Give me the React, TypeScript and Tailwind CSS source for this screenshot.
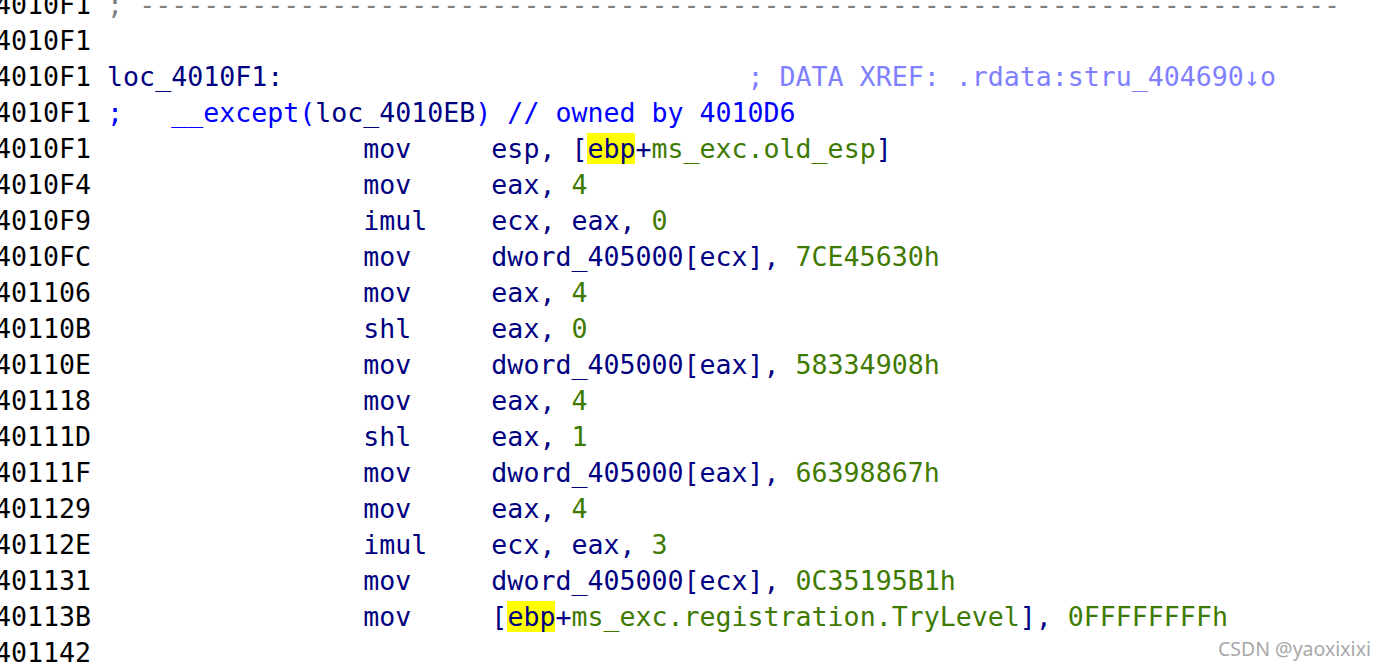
import type { ReactNode } from "react";

const NAVY = "text-[#000080]";
const GREEN = "text-[#3f7a00]";
const BLUE = "text-[#0000ff]";

function Line({ addr, children }: { addr: string; children?: ReactNode }) {
  return (
    <div className="h-[36px] whitespace-pre leading-[36px]">
      <span className="text-black">{addr}</span>
      {children}
    </div>
  );
}

function Ins({ addr, mn, children }: { addr: string; mn: string; children: ReactNode }) {
  return (
    <Line addr={addr}>
      {" ".repeat(17)}
      <span className={NAVY}>{mn.padEnd(8, " ")}</span>
      {children}
    </Line>
  );
}

function Reg({ children }: { children: ReactNode }) {
  return <span className={NAVY}>{children}</span>;
}

function Num({ children }: { children: ReactNode }) {
  return <span className={GREEN}>{children}</span>;
}

function Ebp() {
  return <span className="bg-[#ffff00] text-[#000080]">ebp</span>;
}

export default function App() {
  return (
    <div className="relative h-[670px] w-[1384px] overflow-hidden bg-white">
      <div className="ml-[-5px] mt-[-13px] font-['DejaVu_Sans_Mono',monospace] text-[26.6px]">
        <Line addr="4010F1">
          {" "}
          <span className="text-[#808080]">; {"-".repeat(75)}</span>
        </Line>
        <Line addr="4010F1" />
        <Line addr="4010F1">
          {" "}
          <span className={NAVY}>loc_4010F1:</span>
          {" ".repeat(29)}
          <span className="text-[#8080ff]">; DATA XREF: .rdata:stru_404690↓o</span>
        </Line>
        <Line addr="4010F1">
          {" "}
          <span className={BLUE}>;   __except(</span>
          <span className={NAVY}>loc_4010EB</span>
          <span className={BLUE}>) // owned by 4010D6</span>
        </Line>
        <Ins addr="4010F1" mn="mov">
          <Reg>esp, [</Reg>
          <Ebp />
          <Reg>+</Reg>
          <Num>ms_exc.old_esp</Num>
          <Reg>]</Reg>
        </Ins>
        <Ins addr="4010F4" mn="mov">
          <Reg>eax, </Reg>
          <Num>4</Num>
        </Ins>
        <Ins addr="4010F9" mn="imul">
          <Reg>ecx, eax, </Reg>
          <Num>0</Num>
        </Ins>
        <Ins addr="4010FC" mn="mov">
          <Reg>dword_405000[ecx], </Reg>
          <Num>7CE45630h</Num>
        </Ins>
        <Ins addr="401106" mn="mov">
          <Reg>eax, </Reg>
          <Num>4</Num>
        </Ins>
        <Ins addr="40110B" mn="shl">
          <Reg>eax, </Reg>
          <Num>0</Num>
        </Ins>
        <Ins addr="40110E" mn="mov">
          <Reg>dword_405000[eax], </Reg>
          <Num>58334908h</Num>
        </Ins>
        <Ins addr="401118" mn="mov">
          <Reg>eax, </Reg>
          <Num>4</Num>
        </Ins>
        <Ins addr="40111D" mn="shl">
          <Reg>eax, </Reg>
          <Num>1</Num>
        </Ins>
        <Ins addr="40111F" mn="mov">
          <Reg>dword_405000[eax], </Reg>
          <Num>66398867h</Num>
        </Ins>
        <Ins addr="401129" mn="mov">
          <Reg>eax, </Reg>
          <Num>4</Num>
        </Ins>
        <Ins addr="40112E" mn="imul">
          <Reg>ecx, eax, </Reg>
          <Num>3</Num>
        </Ins>
        <Ins addr="401131" mn="mov">
          <Reg>dword_405000[ecx], </Reg>
          <Num>0C35195B1h</Num>
        </Ins>
        <Ins addr="40113B" mn="mov">
          <Reg>[</Reg>
          <Ebp />
          <Reg>+</Reg>
          <Num>ms_exc.registration.TryLevel</Num>
          <Reg>], </Reg>
          <Num>0FFFFFFFFh</Num>
        </Ins>
        <Line addr="401142" />
      </div>

      {/* watermark */}
      <div className="absolute right-[13px] bottom-[7px] font-['Noto_Sans',sans-serif] text-[19.5px] text-[#a8a8a8]">
        CSDN @yaoxixixi
      </div>
    </div>
  );
}
